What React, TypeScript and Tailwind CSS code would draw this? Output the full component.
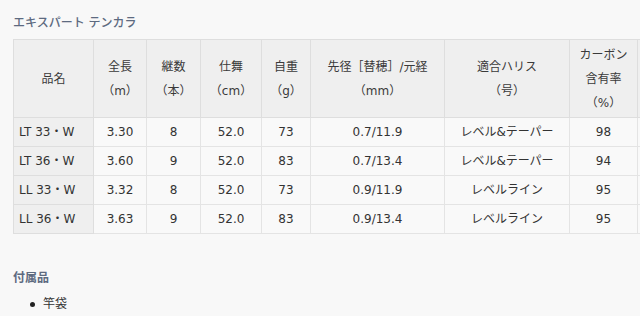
const font = {
  fontFamily: '"DejaVu Sans", "Noto Sans CJK JP", sans-serif',
};

const widths = [80, 53, 54, 61, 49, 134, 125, 68, 60];

const headers: string[][] = [
  ["品名"],
  ["全長", "（m）"],
  ["継数", "（本）"],
  ["仕舞", "（cm）"],
  ["自重", "（g）"],
  ["先径［替穂］/元経", "（mm）"],
  ["適合ハリス", "（号）"],
  ["カーボン", "含有率", "（%）"],
  ["", ""],
];

const rows: string[][] = [
  ["LT 33・W", "3.30", "8", "52.0", "73", "0.7/11.9", "レベル&テーパー", "98", ""],
  ["LT 36・W", "3.60", "9", "52.0", "83", "0.7/13.4", "レベル&テーパー", "94", ""],
  ["LL 33・W", "3.32", "8", "52.0", "73", "0.9/11.9", "レベルライン", "95", ""],
  ["LL 36・W", "3.63", "9", "52.0", "83", "0.9/13.4", "レベルライン", "95", ""],
];

export default function App() {
  return (
    <div
      className="w-[640px] h-[316px] overflow-hidden bg-[#f8f8f8] pl-[13px] pt-[15px] text-[#333]"
      style={font}
    >
      <h2 className="text-[12px] leading-[16px] font-medium text-[#5d6a80] mb-[8px] whitespace-nowrap">
        エキスパート テンカラ
      </h2>

      <table className="table-fixed border-collapse text-[12px] w-[684px]">
        <colgroup>
          {widths.map((w, i) => (
            <col key={i} style={{ width: w }} />
          ))}
        </colgroup>
        <thead>
          <tr className="h-[78px]">
            {headers.map((lines, i) => (
              <th
                key={i}
                className="border border-[#dedede] bg-[#efefef] font-normal text-center align-middle leading-[24px] text-[#3a3a3a] whitespace-nowrap p-0"
              >
                {lines.map((l, j) => (
                  <div key={j}>{l}</div>
                ))}
              </th>
            ))}
          </tr>
        </thead>
        <tbody>
          {rows.map((r) => (
            <tr key={r[0]} className="h-[29px]">
              {r.map((c, i) => (
                <td
                  key={i}
                  className={
                    i === 0
                      ? "border border-[#dedede] bg-[#efefef] text-left pl-[5px] whitespace-nowrap"
                      : "border border-[#e4e4e4] bg-[#f9f9f9] text-center whitespace-nowrap p-0"
                  }
                >
                  {c}
                </td>
              ))}
            </tr>
          ))}
        </tbody>
      </table>

      <h3 className="mt-[36px] text-[12px] leading-[16px] font-bold text-[#5d6a80]">付属品</h3>
      <ul className="mt-[10px] pl-[17px] text-[12px] leading-[16px]">
        <li className="flex items-center gap-[8px]">
          <span className="w-[5px] h-[5px] rounded-full bg-[#222] inline-block" />
          <span>竿袋</span>
        </li>
      </ul>
    </div>
  );
}
